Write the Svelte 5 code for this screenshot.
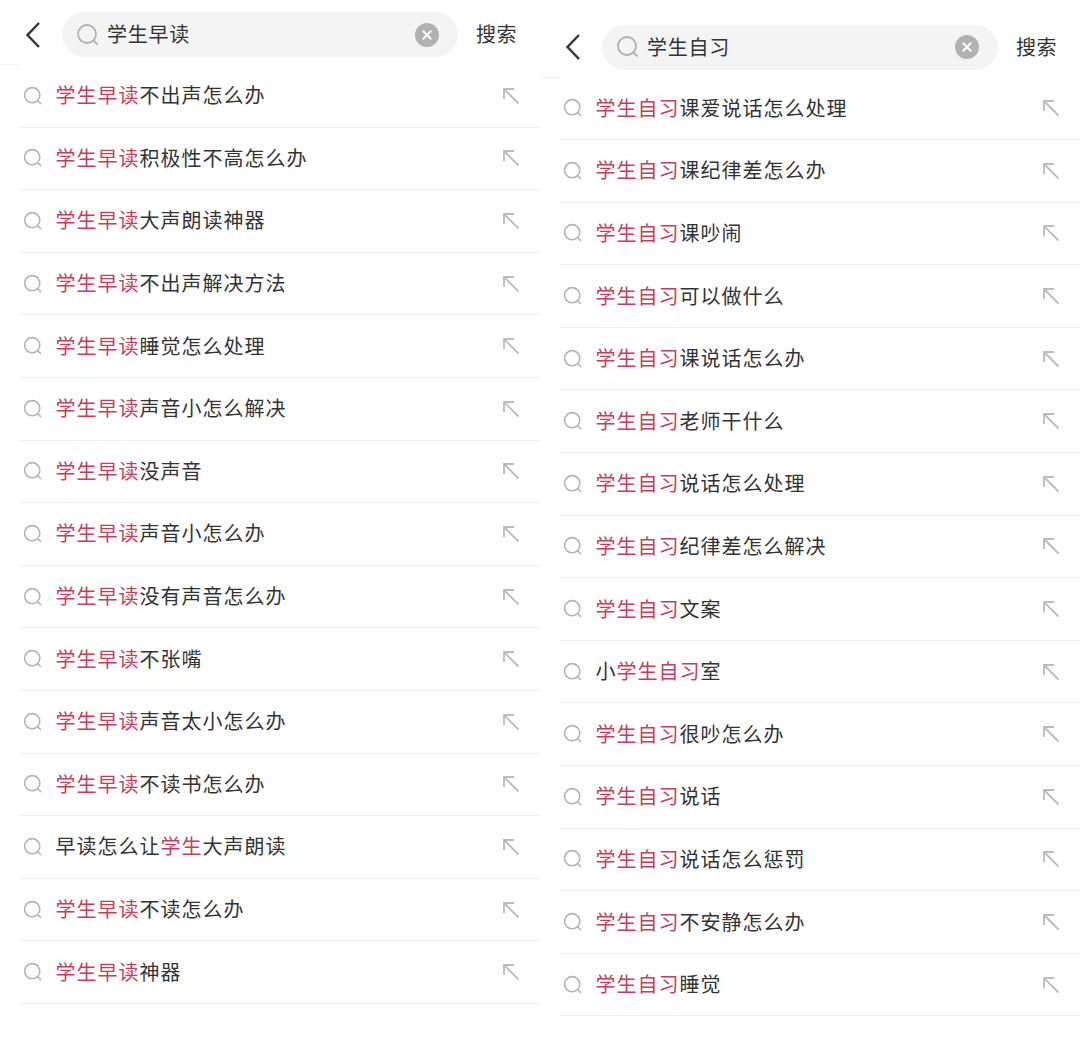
<script lang="ts">
	type Row = { pre?: string; hit: string; post: string };

	const panels: { query: string; rows: Row[] }[] = [
		{
			query: '学生早读',
			rows: [
				{ hit: '学生早读', post: '不出声怎么办' },
				{ hit: '学生早读', post: '积极性不高怎么办' },
				{ hit: '学生早读', post: '大声朗读神器' },
				{ hit: '学生早读', post: '不出声解决方法' },
				{ hit: '学生早读', post: '睡觉怎么处理' },
				{ hit: '学生早读', post: '声音小怎么解决' },
				{ hit: '学生早读', post: '没声音' },
				{ hit: '学生早读', post: '声音小怎么办' },
				{ hit: '学生早读', post: '没有声音怎么办' },
				{ hit: '学生早读', post: '不张嘴' },
				{ hit: '学生早读', post: '声音太小怎么办' },
				{ hit: '学生早读', post: '不读书怎么办' },
				{ pre: '早读怎么让', hit: '学生', post: '大声朗读' },
				{ hit: '学生早读', post: '不读怎么办' },
				{ hit: '学生早读', post: '神器' }
			]
		},
		{
			query: '学生自习',
			rows: [
				{ hit: '学生自习', post: '课爱说话怎么处理' },
				{ hit: '学生自习', post: '课纪律差怎么办' },
				{ hit: '学生自习', post: '课吵闹' },
				{ hit: '学生自习', post: '可以做什么' },
				{ hit: '学生自习', post: '课说话怎么办' },
				{ hit: '学生自习', post: '老师干什么' },
				{ hit: '学生自习', post: '说话怎么处理' },
				{ hit: '学生自习', post: '纪律差怎么解决' },
				{ hit: '学生自习', post: '文案' },
				{ pre: '小', hit: '学生自习', post: '室' },
				{ hit: '学生自习', post: '很吵怎么办' },
				{ hit: '学生自习', post: '说话' },
				{ hit: '学生自习', post: '说话怎么惩罚' },
				{ hit: '学生自习', post: '不安静怎么办' },
				{ hit: '学生自习', post: '睡觉' }
			]
		}
	];
</script>

<div class="page">
	{#each panels as panel, i}
		<section class="panel" class:second={i === 1}>
			<header class="top">
				<svg class="back" width="18" height="28" viewBox="0 0 18 28">
					<path d="M15 2 L3.5 14 L15 26" fill="none" stroke="#333" stroke-width="2.4" />
				</svg>
				<div class="search">
					<svg class="lens" width="24" height="24" viewBox="0 0 24 24">
						<circle cx="11" cy="11" r="9" fill="none" stroke="#b0b0b0" stroke-width="1.8" />
						<path d="M17.6 17.6 L21.5 21.5" stroke="#b0b0b0" stroke-width="1.8" />
					</svg>
					<span class="query">{panel.query}</span>
					<svg class="clear" width="24" height="24" viewBox="0 0 24 24">
						<circle cx="12" cy="12" r="12" fill="#b1b1b1" />
						<path d="M7.8 7.8 L16.2 16.2 M16.2 7.8 L7.8 16.2" stroke="#fff" stroke-width="2" />
					</svg>
				</div>
				<span class="go">搜索</span>
			</header>
			<ul class="list">
				{#each panel.rows as row}
					<li class="row">
						<svg class="lens small" width="20" height="20" viewBox="0 0 20 20">
							<circle cx="9.2" cy="9.2" r="7.6" fill="none" stroke="#b4b4b4" stroke-width="1.6" />
							<path d="M14.8 14.8 L18 18" stroke="#b4b4b4" stroke-width="1.6" />
						</svg>
						<span class="label">{row.pre ?? ''}<em>{row.hit}</em>{row.post}</span>
						<svg class="fill" width="18" height="18" viewBox="0 0 18 18">
							<path d="M2 12 V2 H12 M2 2 L16.5 16.5" fill="none" stroke="#bcbcbc" stroke-width="1.8" />
						</svg>
					</li>
				{/each}
			</ul>
		</section>
	{/each}
</div>

<style>
	:global(body) {
		margin: 0;
		background: #fff;
	}

	.page {
		display: flex;
		width: 1080px;
		height: 1052px;
		overflow: hidden;
		font-family: "Noto Sans CJK SC", "Liberation Sans", sans-serif;
		color: #333;
	}

	.panel {
		width: 540px;
		flex-shrink: 0;
	}

	.second {
		padding-top: 12.5px;
	}

	.top {
		display: flex;
		align-items: center;
		height: 65px;
		box-sizing: border-box;
		padding: 0 23px 0 24px;
		/* short stub of the header rule, left of the list dividers */
		background: linear-gradient(#f3f3f3, #f3f3f3) left bottom / 20px 1px no-repeat;
	}

	.back {
		flex-shrink: 0;
		margin-right: 20px;
		margin-top: 4px;
	}

	.search {
		display: flex;
		align-items: center;
		width: 396px;
		height: 45px;
		box-sizing: border-box;
		padding: 0 19px 0 14px;
		margin-top: 4px;
		border-radius: 23px;
		background: #f4f4f4;
	}

	.query {
		flex: 1;
		margin-left: 7px;
		margin-top: -2px;
		font-size: 20px;
		letter-spacing: 0.75px;
	}

	.go {
		margin-left: 18px;
		margin-top: 2px;
		font-size: 20px;
		letter-spacing: 0.5px;
		white-space: nowrap;
	}

	.list {
		list-style: none;
		margin: 0;
		padding: 0 0 0 20px;
	}

	.row {
		display: flex;
		align-items: center;
		height: 62.6px;
		box-sizing: border-box;
		padding: 0 20px 0 3px;
		border-bottom: 1px solid #f0f0f0;
	}

	.label {
		flex: 1;
		margin-left: 12.5px;
		margin-top: -2px;
		font-size: 20px;
		letter-spacing: 1px;
		white-space: nowrap;
	}

	em {
		font-style: normal;
		color: #c4405a;
	}
</style>
